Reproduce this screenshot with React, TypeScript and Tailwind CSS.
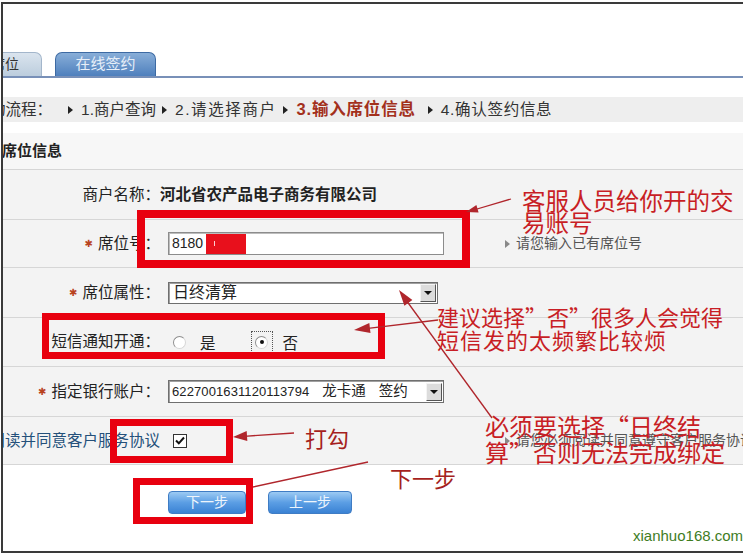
import React from "react";

function Tri() {
  return <span className="inline-block w-0 h-0 border-y-[4px] border-y-transparent border-l-[5px] border-l-[#222]" />;
}

function Star() {
  return <span className="text-[#b8431f] text-[10px] leading-none mr-[5px] font-['DejaVu_Sans',sans-serif]">✱</span>;
}

function Row({ h, children, label, hint }: { h: string; children?: React.ReactNode; label: React.ReactNode; hint?: React.ReactNode }) {
  return (
    <div className={`${h} shrink-0 flex items-center bg-[#f3f3f3] border-b border-[#d6d6d6] whitespace-nowrap`}>
      <div className="w-[157px] shrink-0 flex justify-end items-center text-[15.5px] text-[#222]">{label}</div>
      <div className="w-[340px] shrink-0 flex items-center">{children}</div>
      {hint}
    </div>
  );
}

function Hint({ children }: { children: React.ReactNode }) {
  return (
    <div className="flex items-center text-[14px] text-[#555] ml-[5px]">
      <span className="inline-block w-0 h-0 border-y-[4px] border-y-transparent border-l-[5px] border-l-[#888] mr-[6px]" />
      {children}
    </div>
  );
}

function DropBtn() {
  return (
    <div className="w-[16px] h-[18px] shrink-0 bg-[#dcdcdc] border border-t-[#f4f4f4] border-l-[#f4f4f4] border-b-[#555] border-r-[#555] flex items-center justify-center">
      <span className="inline-block w-0 h-0 border-x-[4px] border-x-transparent border-t-[4px] border-t-[#111]" />
    </div>
  );
}

function Btn({ w, children }: { w: string; children: React.ReactNode }) {
  return (
    <div className={`${w} h-[23px] rounded-[4px] border border-[#3f7cc4] bg-linear-to-b from-[#9ccaf3] via-[#5b9ee4] to-[#3a82d4] flex items-center justify-center text-[14px] text-[#eef5fc]`}>
      {children}
    </div>
  );
}

export default function App() {
  const red = "#c81e25";
  const line = "#b0262c";
  return (
    <div className="relative w-[749px] h-[555px] overflow-hidden bg-white pt-[2px] pl-[1px] font-['Liberation_Sans','Noto_Sans_CJK_SC',sans-serif] text-[#222]">
      <div className="flex flex-col w-[742px] h-[551px] border-l-2 border-t-2 border-b-2 border-[#3a3a3a] overflow-hidden">
        <div className="h-[48px] shrink-0" />
        {/* tabs */}
        <div className="flex items-end h-[24px] shrink-0">
          <div className="w-[39px] h-[24px] rounded-tr-[7px] bg-linear-to-b from-[#dae4ee] to-[#bccddd] border-r border-t border-[#a3b6cb] flex items-center overflow-hidden">
            <span className="ml-[-12px] text-[14px] text-[#333] whitespace-nowrap">席位</span>
          </div>
          <div className="ml-[13px] w-[101px] h-[24px] rounded-t-[7px] bg-linear-to-b from-[#88aed8] to-[#4f80bd] border border-b-0 border-[#3d6aa3] flex items-center justify-center text-[15px] text-[#e6eef8]">
            在线签约
          </div>
        </div>
        <div className="h-[2px] bg-[#7890b8] shrink-0" />
        <div className="h-[19px] shrink-0" />
        {/* breadcrumb */}
        <div className="h-[25px] shrink-0 bg-[#eeeeee] flex items-center text-[15.5px] text-[#333] whitespace-nowrap">
          <span className="ml-[-13px]">动流程：</span>
          <span className="ml-[16px] flex"><Tri /></span>
          <span className="ml-[8px]">1.商户查询</span>
          <span className="ml-[6px] flex"><Tri /></span>
          <span className="ml-[8px] tracking-[1.6px]">2.请选择商户</span>
          <span className="ml-[6px] flex"><Tri /></span>
          <span className="ml-[9px] font-bold text-[16.5px] tracking-[0.8px] text-[#a3301c]">3.输入席位信息</span>
          <span className="ml-[12px] flex"><Tri /></span>
          <span className="ml-[8px] tracking-[0.7px]">4.确认签约信息</span>
        </div>
        <div className="h-[11px] shrink-0" />
        {/* header */}
        <div className="h-[37px] shrink-0 bg-[#f7f7f7] border-b border-[#d6d6d6] flex items-center text-[15px] font-bold text-[#222]">
          <span className="ml-[-1px]">席位信息</span>
        </div>
        {/* rows */}
        <Row h="h-[50px]" label={<span>商户名称：</span>}>
          <span className="text-[15.5px] font-bold text-[#222]">河北省农产品电子商务有限公司</span>
        </Row>
        <Row
          h="h-[48px]"
          label={<><Star /><span>席位号：</span></>}
          hint={<Hint>请您输入已有席位号</Hint>}
        >
          <div className="ml-[8px] w-[276px] h-[23px] bg-white border border-[#8c8c8c] shadow-[inset_1px_1px_0_#bdbdbd] flex items-center pl-[3px] text-[14px]">
            <span>8180</span>
            <span className="ml-[3px] w-[40px] h-[20px] bg-[#e8101c] flex items-center pl-[8px]">
              <span className="w-[1px] h-[5px] bg-white/80" />
            </span>
          </div>
        </Row>
        <Row h="h-[50px]" label={<><Star /><span>席位属性：</span></>}>
          <div className="ml-[8px] w-[270px] h-[22px] bg-white border border-[#6f6f6f] shadow-[inset_1px_1px_0_#a0a0a0] flex items-center justify-between pl-[4px] pr-[1px]">
            <span className="text-[16px]">日终清算</span>
            <DropBtn />
          </div>
        </Row>
        <Row h="h-[49px]" label={<span>短信通知开通：</span>}>
          <span className="ml-[13px] w-[13px] h-[13px] rounded-full border border-[#8d8d8d] border-b-[#d6d6d6] border-r-[#d6d6d6] bg-white" />
          <span className="ml-[14px] text-[15.5px] mt-[4px]">是</span>
          <span className="ml-[35px] w-[22px] h-[22px] border border-dotted border-[#555] flex items-center justify-center">
            <span className="w-[13px] h-[13px] rounded-full border border-[#8d8d8d] border-b-[#d6d6d6] border-r-[#d6d6d6] bg-white flex items-center justify-center">
              <span className="w-[4px] h-[4px] rounded-full bg-[#111]" />
            </span>
          </span>
          <span className="ml-[10px] text-[15.5px] mt-[4px]">否</span>
        </Row>
        <Row h="h-[50px]" label={<><Star /><span>指定银行账户：</span></>}>
          <div className="ml-[8px] w-[276px] h-[23px] bg-white border border-[#6f6f6f] shadow-[inset_1px_1px_0_#a0a0a0] flex items-center justify-between pl-[3px] pr-[1px]">
            <span className="flex items-center">
              <span className="text-[13px] tracking-[0.1px]">6227001631120113794</span>
              <span className="ml-[13px] text-[14.5px]">龙卡通</span>
              <span className="ml-[13px] text-[14.5px]">签约</span>
            </span>
            <DropBtn />
          </div>
        </Row>
        <Row
          h="h-[48px]"
          label={<span className="text-[#24507a]">阅读并同意客户服务协议</span>}
          hint={<Hint>请您必须阅读并同意遵守客户服务协议</Hint>}
        >
          <span className="ml-[13px] w-[14px] h-[14px] border border-[#333] bg-white flex items-center justify-center">
            <svg width="10" height="9" viewBox="0 0 10 9">
              <path d="M1 4.5 L3.8 7.3 L9 1.5" stroke="#111" strokeWidth="2" fill="none" />
            </svg>
          </span>
        </Row>
        {/* buttons */}
        <div className="flex pt-[26px] pl-[165px] gap-[22px]">
          <Btn w="w-[78px]">下一步</Btn>
          <Btn w="w-[84px]">上一步</Btn>
        </div>
      </div>

      {/* watermark */}
      <div className="absolute left-[633px] top-[525px] text-[15px] text-[#3f7d1f] font-['Liberation_Sans',sans-serif]">xianhuo168.com</div>

      {/* annotations */}
      <div className="absolute inset-0 pointer-events-none">
        <div className="absolute left-[137px] top-[210px] w-[333px] h-[58px] border-[8px] border-[#e8000f]" />
        <div className="absolute left-[42px] top-[313px] w-[343px] h-[46px] border-[7px] border-[#e8000f]" />
        <div className="absolute left-[110px] top-[419px] w-[123px] h-[44px] border-[7px] border-[#e8000f]" />
        <div className="absolute left-[133px] top-[478px] w-[120px] h-[46px] border-[7px] border-[#e8000f]" />

        <svg className="absolute left-0 top-0" width="749" height="555" viewBox="0 0 749 555">
          <g stroke={line} strokeWidth="1.3" fill="none">
            <line x1="511" y1="199" x2="472" y2="210.5" />
            <line x1="438" y1="320" x2="366" y2="328.6" />
            <line x1="492" y1="418" x2="406" y2="300" />
            <line x1="294" y1="433" x2="244" y2="436.3" />
            <line x1="253" y1="487" x2="368" y2="462" />
          </g>
          <g fill={line}>
            <polygon points="466,212 478.6,212.5 476.4,204.9" />
            <polygon points="354,330 370.5,333.1 369.3,323.1" />
            <polygon points="399,290 404.4,305.8 412.4,300" />
            <polygon points="233,437 247.3,441.1 246.7,431.1" />
          </g>
        </svg>

        <div className="absolute left-[522px] top-[189px] text-[23.5px] leading-[22px] whitespace-nowrap font-['Noto_Sans_CJK_SC',sans-serif]" style={{ color: red }}>
          客服人员给你开的交<br />易账号
        </div>
        <div className="absolute left-[437px] top-[305px] text-[22px] leading-[23px] whitespace-nowrap font-['Noto_Sans_CJK_SC',sans-serif]" style={{ color: red }}>
          建议选择”否”很多人会觉得<br /><span className="tracking-[1px]">短信发的太频繁比较烦</span>
        </div>
        <div className="absolute left-[485px] top-[413px] text-[24px] leading-[26px] whitespace-nowrap font-['Noto_Sans_CJK_SC',sans-serif]" style={{ color: red }}>
          必须要选择“日终结<br />算”否则无法完成绑定
        </div>
        <div className="absolute left-[305px] top-[424px] text-[22px] leading-[26px] whitespace-nowrap text-[#a51f20] font-['Noto_Sans_CJK_SC',sans-serif]">打勾</div>
        <div className="absolute left-[390px] top-[464px] text-[22px] leading-[26px] whitespace-nowrap text-[#a51f20] font-['Noto_Sans_CJK_SC',sans-serif]">下一步</div>
      </div>
    </div>
  );
}
